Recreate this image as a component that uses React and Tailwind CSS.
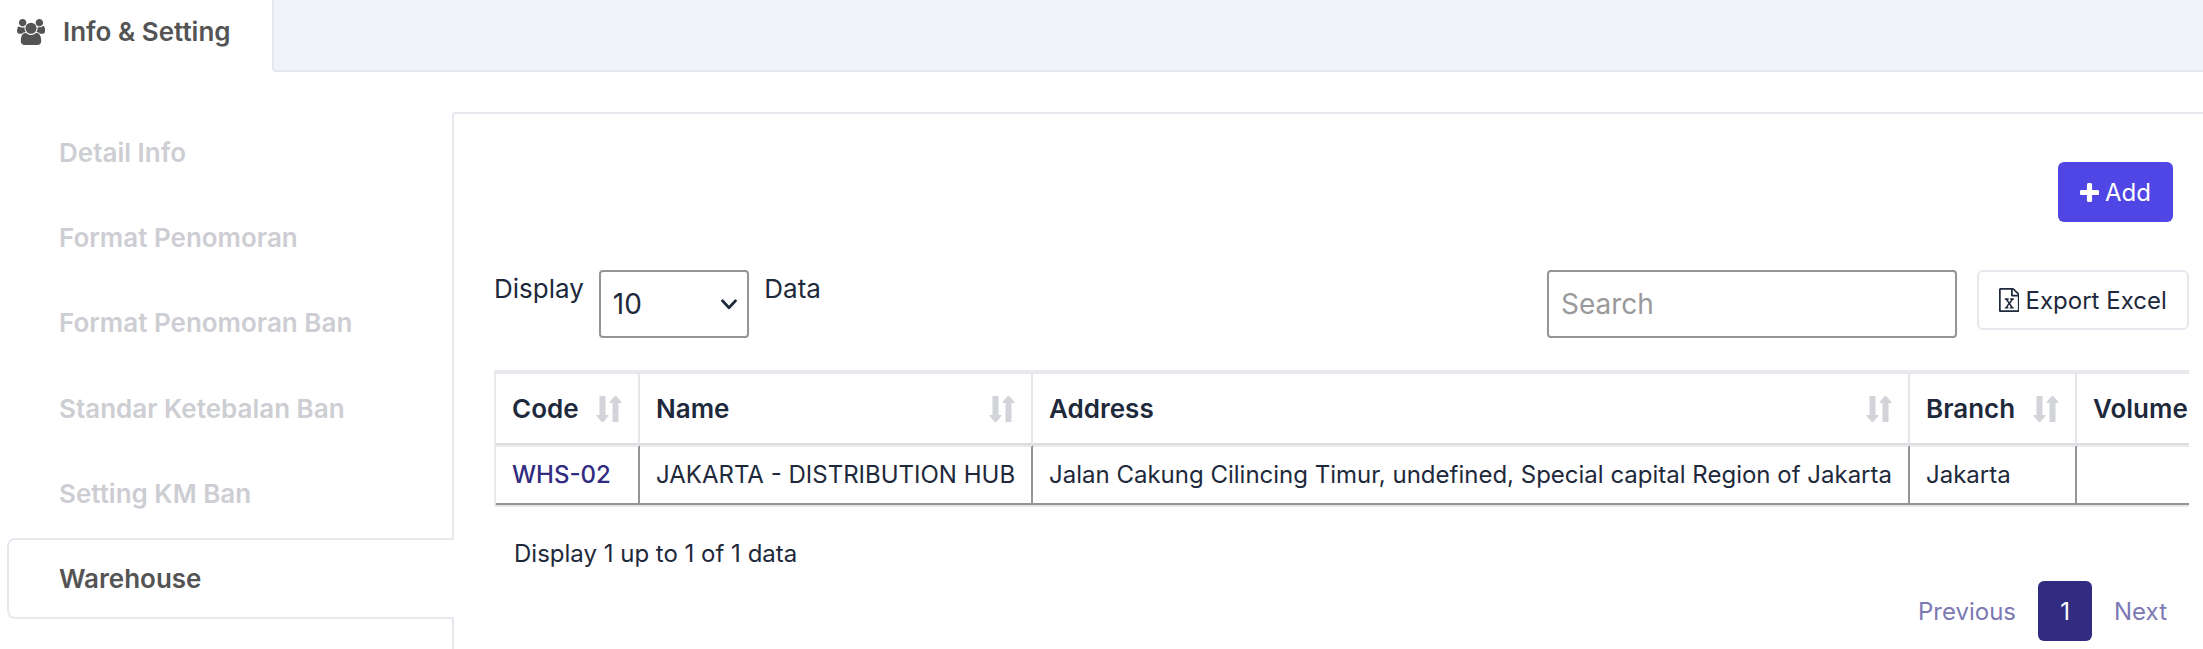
import React from "react";

const MENU = [
  "Detail Info",
  "Format Penomoran",
  "Format Penomoran Ban",
  "Standar Ketebalan Ban",
  "Setting KM Ban",
  "Warehouse",
];

const COLUMNS = [
  { label: "Code", width: "w-[144px]" },
  { label: "Name", width: "w-[393px]" },
  { label: "Address", width: "w-[877px]" },
  { label: "Branch", width: "w-[167px]" },
  { label: "Volume", width: "w-[180px]" },
];

const ROW = [
  "WHS-02",
  "JAKARTA - DISTRIBUTION HUB",
  "Jalan Cakung Cilincing Timur, undefined, Special capital Region of Jakarta",
  "Jakarta",
  "",
];

function UsersIcon() {
  return (
    <svg className="h-[26px] w-[28px] shrink-0" viewBox="64 0 1920 1792" fill="currentColor">
      <path d="M657 896q-162 5-265 128h-134q-82 0-138-40.5t-56-118.5q0-353 124-353 6 0 43.5 21t97.5 42.5 119 21.5q67 0 133-23-5 37-5 66 0 159 93 283zm1071 637q0 120-73 189.5t-194 69.5h-874q-121 0-194-69.5t-73-189.5q0-53 3.5-103.5t14-109 26.5-108.5 43-97.5 62-81 85.5-53.5 111.5-20q10 0 43 21.5t73 48 107 48 135 21.5 135-21.5 107-48 73-48 43-21.5q61 0 111.5 20t85.5 53.5 62 81 43 97.5 26.5 108.5 14 109 3.5 103.5zm-1024-1277q0 106-75 181t-181 75-181-75-75-181 75-181 181-75 181 75 75 181zm704 384q0 159-112.5 271.5t-271.5 112.5-271.5-112.5-112.5-271.5 112.5-271.5 271.5-112.5 271.5 112.5 112.5 271.5zm576 225q0 78-56 118.5t-138 40.5h-134q-103-123-265-128 93-124 93-283 0-29-5-66 66 23 133 23 59 0 119-21.5t97.5-42.5 43.5-21q124 0 124 353zm-128-609q0 106-75 181t-181 75-181-75-75-181 75-181 181-75 181 75 75 181z" />
    </svg>
  );
}

function PlusIcon() {
  return (
    <svg className="size-[19px] shrink-0" viewBox="192 128 1408 1408" fill="currentColor">
      <path d="M1600 736v192q0 40-28 68t-68 28h-416v416q0 40-28 68t-68 28h-192q-40 0-68-28t-28-68v-416h-416q-40 0-68-28t-28-68v-192q0-40 28-68t68-28h416v-416q0-40 28-68t68-28h192q40 0 68 28t28 68v416h416q40 0 68 28t28 68z" />
    </svg>
  );
}

function ExcelIcon() {
  return (
    <svg className="h-6 w-[20.6px] shrink-0" viewBox="128 0 1536 1792" fill="currentColor">
      <path d="M1596 380q28 28 48 76t20 88v1152q0 40-28 68t-68 28h-1344q-40 0-68-28t-28-68v-1600q0-40 28-68t68-28h896q40 0 88 20t76 48zm-444-244v376h376q-10-29-22-41l-313-313q-12-12-41-22zm384 1528v-1024h-416q-40 0-68-28t-28-68v-416h-768v1536h1280zm-979-234v106h281v-106h-75l103-161q5-7 10-16.5t7.5-13.5 3.5-4h2q1 4 5 10 2 4 4.5 7.5t6 8 6.5 8.5l107 161h-76v106h291v-106h-68l-192-273 195-282h67v-107h-279v107h74l-103 159q-4 7-10 16.5t-9 13.5l-2 3h-2q-1-4-5-10-6-11-17-23l-106-159h76v-107h-290v107h68l189 272-194 283h-68z" />
    </svg>
  );
}

function SortIcon() {
  return (
    <svg className="h-[26px] w-[26px] shrink-0 text-[#d2d4d9]" viewBox="0 0 26 26" fill="currentColor">
      <path d="M3.500.5q0-.5.5-.5h5q.5 0 .5.5v18.500h2.600q1 0 .3.9L8.200 25q-.7 1-1.700 1t-1.700-1L.600 19.900q-.7-.9.3-.9h2.600z" />
      <path d="M16.500 25.500q0 .5.5.5h5q.5 0 .5-.5V7h2.600q1 0 .3-.9L21.200 1q-.7-1-1.700-1t-1.700 1l-4.200 5.100q-.7.9.3.9h2.600z" />
    </svg>
  );
}

export default function App() {
  return (
    <div className="h-[649px] w-full overflow-hidden bg-white font-['Inter',sans-serif] text-[24px] leading-9 whitespace-nowrap text-[#1e293b]">
      <header className="flex h-[72px]">
        <div className="flex w-[272px] items-center gap-[18px] pb-2 pl-[17px] text-[26px] font-semibold text-[#545454]">
          <UsersIcon />
          <span>Info &amp; Setting</span>
        </div>
        <div className="flex-1 rounded-bl-[4px] border-b-2 border-l-2 border-[#e5e9ed] bg-[#f0f3f8]" />
      </header>

      <div className="flex pt-10">
        <nav className="relative z-10 ml-[7px] flex w-[447px] shrink-0 flex-col gap-1">
          {MENU.map((label) => (
            <div
              key={label}
              className={
                label === "Warehouse"
                  ? "flex h-[81.2px] items-center rounded-l-[8px] rounded-r-[2px] border-2 border-r-0 border-[#e5e9ee] bg-white pl-[50px] text-[26px] font-semibold text-[#545454]"
                  : "flex h-[81.2px] items-center pt-[0.7px] pl-[52px] text-[26px] font-semibold text-[#cdced3]"
              }
            >
              {label}
            </div>
          ))}
        </nav>

        <main className="-ml-0.5 h-[560px] min-w-0 flex-1 rounded-tl-[4px] border-t-2 border-l-2 border-[#e5e9ee] pt-12 pr-[14px] pl-10">
          <div className="flex justify-end pr-4">
            <button className="flex h-[60px] w-[115px] items-center gap-[6.5px] rounded-[6px] bg-[#4f46e5] pl-[21.5px] text-white">
              <PlusIcon />
              <span className="pt-0.5">Add</span>
            </button>
          </div>

          <div className="mt-12 flex h-[68px] items-start">
            <span className="pt-px text-[26px]">Display</span>
            <button className="ml-[15px] flex h-[68px] w-[150px] items-center justify-between rounded-[4px] border-2 border-[#949494] pr-[10px] pl-3 text-[28px]">
              <span>10</span>
              <svg className="h-[11px] w-[16px]" viewBox="0 0 16 11" fill="none" stroke="currentColor" strokeWidth="2.7" strokeLinecap="round" strokeLinejoin="round">
                <path d="M1.500 1.800 8 8.700l6.500-6.900" />
              </svg>
            </button>
            <span className="pt-px pl-[15.5px] text-[26px]">Data</span>
            <input
              placeholder="Search"
              className="ml-auto h-[68px] w-[410px] rounded-[4px] border-2 border-[#949494] px-3 text-[28px] placeholder:text-[#9a9a9a]"
            />
            <button className="ml-5 flex h-[60px] w-[212px] items-center gap-[6.5px] rounded-[6px] border-2 border-[#e5e9ee] pl-[19.5px]">
              <ExcelIcon />
              <span className="pt-0.5">Export Excel</span>
            </button>
          </div>

          <div className="mt-8 overflow-hidden">
            <div className="w-[1763px] border-t-4 border-b-2 border-l-2 border-t-[#e7e9ec] border-b-[#e5e6e8] border-l-[#e7e9ec]">
              <div className="flex h-[71px]">
                {COLUMNS.map((c) => (
                  <div
                    key={c.label}
                    className={`${c.width} flex shrink-0 items-center justify-between border-r-2 border-b-2 border-r-[#e5e7ea] border-b-[#dcdddf] px-4 text-[26px] font-semibold`}
                  >
                    <span>{c.label}</span>
                    <SortIcon />
                  </div>
                ))}
              </div>
              <div className="flex h-[60px]">
                {ROW.map((value, i) => (
                  <div
                    key={COLUMNS[i].label}
                    className={`${COLUMNS[i].width} ${i === 0 ? "font-medium text-[#312c81]" : ""} flex shrink-0 items-center border-t-2 border-r-2 border-b-2 border-t-[#e7eaed] border-r-[#949494] border-b-[#949494] px-4`}
                  >
                    {value}
                  </div>
                ))}
              </div>
            </div>
          </div>

          <div className="mt-[29px] pl-5">Display 1 up to 1 of 1 data</div>

          <div className="mt-[9px] flex h-[60px] justify-end text-[#7c79b3]">
            <span className="flex items-center px-[22px] pt-0.5">Previous</span>
            <span className="flex w-[54px] items-center justify-center rounded-[6px] bg-[#312c81] pt-0.5 text-white">1</span>
            <span className="flex items-center px-[22px] pt-0.5">Next</span>
          </div>
        </main>
      </div>
    </div>
  );
}
